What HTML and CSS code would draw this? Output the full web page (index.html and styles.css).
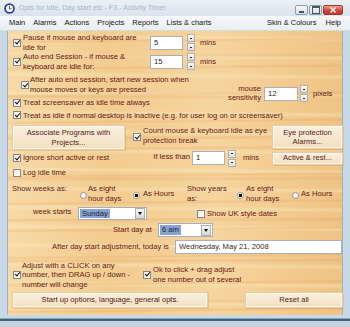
FILE: index.html
```html
<!DOCTYPE html>
<html>
  <head>
    <title>Opts for Idle, Day start etc - F3 - Activity Timer</title>
    <meta charset="UTF-8">
    <link rel="stylesheet" href="styles.css">
  </head>
  <body>
    <div class="win">
      <div class="titlebar">
        <svg class="appicon" width="11" height="11" viewBox="0 0 11 11">
          <circle cx="5.5" cy="5.5" r="5.3" fill="#1e48a6"/>
          <circle cx="5.5" cy="5.5" r="3.5" fill="#fff"/>
          <path d="M5.5 2.8v2.9h2.1" stroke="#d3352b" stroke-width="1.1" fill="none"/>
        </svg>
        <span class="title">Opts for Idle, Day start etc - F3 - Activity Timer</span>
        <div class="ctrls">
          <span class="cbtn min"></span>
          <span class="cbtn max"></span>
          <span class="cbtn close">
            <svg width="8" height="6" viewBox="0 0 8 6"><path d="M1.5 0.5l5 5M6.5 0.5l-5 5" stroke="#fff" stroke-width="1.4"/></svg>
          </span>
        </div>
      </div>

      <div class="menubar">
        <span>Main</span><span>Alarms</span><span>Actions</span><span>Projects</span><span>Reports</span><span>Lists &amp; charts</span>
        <span class="right">Skin &amp; Colours</span><span class="last">Help</span>
      </div>

      <div class="frame">
        <div class="panel">
          <div class="row r-idle">
            <span class="cb on"></span>
            <span class="lbl idle-lbl">Pause if mouse and keyboard are<br>idle for</span>
            <span class="field idle-val">5</span>
            <span class="spin"><i></i><i></i></span>
            <span class="unit">mins</span>
          </div>
          <div class="row r-idle">
            <span class="cb on"></span>
            <span class="lbl idle-lbl">Auto end Session - if mouse &amp;<br>keyboard are idle for:</span>
            <span class="field idle-val">15</span>
            <span class="spin"><i></i><i></i></span>
            <span class="unit">mins</span>
          </div>
          <div class="row r-restart">
            <span class="cb on"></span>
            <span class="lbl restart-lbl">After auto end session, start new session when<br>mouse moves or keys are pressed</span>
            <div class="sens">
              <span class="sens-lbl">mouse<br>sensitivity</span>
              <span class="field sens-val">12</span>
              <span class="spin"><i></i><i></i></span>
              <span class="unit">pixels</span>
            </div>
          </div>
          <div class="row r-line r-saver">
            <span class="cb on"></span>
            <span class="lbl">Treat screensaver as idle time always</span>
          </div>
          <div class="row r-line r-desk">
            <span class="cb on"></span>
            <span class="lbl">Treat as idle if normal desktop is inactive (e.g. for user log on or screensaver)</span>
          </div>
          <div class="row r-assoc">
            <button class="btn assoc">Associate Programs with<br>Projects...</button>
            <span class="cb on"></span>
            <span class="lbl eye-lbl">Count mouse &amp; keyboard idle as eye<br>protection break</span>
            <button class="btn eye">Eye protection<br>Alarms...</button>
          </div>
          <div class="row r-short">
            <span class="cb on"></span>
            <span class="lbl short-lbl">Ignore short active or rest</span>
            <span class="less">If less than</span>
            <span class="field less-val">1</span>
            <span class="spin"><i></i><i></i></span>
            <span class="unit less-unit">mins</span>
            <button class="btn rest">Active &amp; rest...</button>
          </div>
          <div class="row r-line r-log">
            <span class="cb"></span>
            <span class="lbl">Log idle time</span>
          </div>
          <div class="row r-show">
            <span class="show-weeks">Show weeks as:</span>
            <span class="rb"></span>
            <span class="opt opt-eight">As eight<br>hour days</span>
            <span class="rb on"></span>
            <span class="opt opt-hours">As Hours</span>
            <span class="show-years">Show years<br>as:</span>
            <span class="rb on"></span>
            <span class="opt opt-eight2">As eight<br>hour days</span>
            <span class="rb"></span>
            <span class="opt opt-hours2">As Hours</span>
          </div>
          <div class="row r-week">
            <span class="week-lbl">week starts</span>
            <span class="sel week-sel"><span class="val">Sunday</span><span class="dd"></span></span>
            <span class="cb uk-cb"></span>
            <span class="lbl">Show UK style dates</span>
          </div>
          <div class="row r-start">
            <span class="start-lbl">Start day at</span>
            <span class="sel start-sel"><span class="val">6 am</span><span class="dd"></span></span>
          </div>
          <div class="row r-today">
            <span class="today-lbl">After day start adjustment, today is</span>
            <span class="field today-val">Wednesday, May 21, 2008</span>
          </div>
          <div class="row r-adjust">
            <span class="cb on"></span>
            <span class="lbl adjust-lbl">Adjust with a CLICK on any<br>number, then DRAG up / down -<br>number will change</span>
            <span class="cb on"></span>
            <span class="lbl">Ok to click + drag adjust<br>one number out of several</span>
          </div>
          <div class="row r-btns">
            <button class="btn startup">Start up options, language, general opts.</button>
            <button class="btn reset">Reset all</button>
          </div>
        </div>
      </div>
      <div class="bottom"></div>
    </div>
  </body>
</html>
```

FILE: styles.css
```css
* {
  box-sizing: border-box;
}
html, body {
  margin: 0;
  width: 350px;
  height: 327px;
  overflow: hidden;
}
body {
  font-family: "Liberation Sans", Arial, sans-serif;
  font-size: 7.6px;
  line-height: 9.5px;
  color: #661815;
  background: #c9d6e2;
}
.win {
  width: 350px;
  height: 327px;
  display: flex;
  flex-direction: column;
}

/* title bar */
.titlebar {
  height: 16px;
  display: flex;
  align-items: center;
  padding-left: 4px;
  background: linear-gradient(#eaf0f6, #d9e4ee);
  color: #aab6c3;
  font-size: 7.2px;
}
.appicon {
  flex: none;
}
.title {
  margin-left: 4px;
  white-space: nowrap;
}
.ctrls {
  margin-left: auto;
  margin-right: 7px;
  align-self: flex-start;
  margin-top: 5px;
  display: flex;
  gap: 1px;
}
.cbtn {
  height: 10px;
  width: 13px;
  border: 1px solid #8e9eae;
  border-radius: 2px;
  background: linear-gradient(#f8fafc, #d6dee6);
  display: flex;
  align-items: center;
  justify-content: center;
}
.cbtn.min::after {
  content: '';
  width: 5px;
  height: 2px;
  margin-top: 3px;
  background: #4a5560;
}
.cbtn.max::after {
  content: '';
  width: 6px;
  height: 5px;
  border: 1px solid #4a5560;
  border-top-width: 2px;
}
.cbtn.close {
  width: 20px;
  border-color: #9a3a30;
  background: linear-gradient(#eea093, #d0493a 55%, #c1392b);
}

/* menu */
.menubar {
  height: 15px;
  display: flex;
  align-items: center;
  padding: 0 9px;
  background: linear-gradient(#f7f9fb, #e9eef3);
  border-bottom: 1px solid #d3dbe3;
  color: #141414;
  font-size: 7.5px;
  white-space: nowrap;
}
.menubar span {
  margin-right: 8px;
}
.menubar .right {
  margin-left: auto;
  margin-right: 9px;
}
.menubar .last {
  margin-right: 0;
}

/* frame + wood panel */
.frame {
  display: flex;
  border-left: 7px solid #c9d8e6;
  border-right: 7px solid #c9d8e6;
}
.panel {
  width: 336px;
  height: 284px;
  padding: 2px 0 0 6px;
  box-shadow: inset 1px 0 0 #9fb2c4, inset -1px 0 0 #9fb2c4;
  background-color: #f1c88a;
  background-image:
    repeating-linear-gradient(179.4deg, rgba(0,0,0,0) 0 9px, rgba(222,150,80,.22) 11px, rgba(0,0,0,0) 13px, rgba(0,0,0,0) 27px),
    repeating-linear-gradient(180.5deg, rgba(0,0,0,0) 0 5px, rgba(255,238,200,.35) 8px, rgba(0,0,0,0) 11px, rgba(0,0,0,0) 19px),
    repeating-linear-gradient(179.8deg, rgba(0,0,0,0) 0 23px, rgba(215,135,65,.18) 25px, rgba(0,0,0,0) 28px, rgba(0,0,0,0) 41px),
    linear-gradient(90deg, rgba(255,236,196,.5), rgba(255,236,196,.1) 30%, rgba(255,236,196,.35) 62%, rgba(232,172,104,.2));
}
.bottom {
  flex: 1;
  background: linear-gradient(#c9d8e6 0 3px, #8aa4bb 3px 4px, #3f6478 4px 6px, #c5d2de 6px);
}

/* rows */
.row {
  display: flex;
  align-items: center;
  white-space: nowrap;
}
.cb {
  flex: none;
  width: 8px;
  height: 8px;
  border: 1px solid #878787;
  background: linear-gradient(135deg, #e9e9e9, #fff);
}
.cb.on::after {
  content: '';
  display: block;
  width: 2px;
  height: 4px;
  margin: -0.5px 0 0 1.6px;
  border: solid #151515;
  border-width: 0 1.5px 1.5px 0;
  transform: rotate(40deg);
}
.lbl {
  margin-left: 2px;
}
.field {
  flex: none;
  display: flex;
  align-items: center;
  height: 14px;
  padding-left: 3px;
  background: #fff;
  border: 1px solid #a9afb7;
  color: #1b1b33;
}
.spin {
  flex: none;
  width: 8px;
  height: 17px;
  display: flex;
  flex-direction: column;
  justify-content: space-between;
}
.spin i {
  height: 8px;
  border: 1px solid #b2b2b2;
  background: linear-gradient(#fbfbfb, #dcdcdc);
  display: flex;
  align-items: center;
  justify-content: center;
}
.spin i::after {
  content: '';
  width: 2px;
  height: 1px;
  background: #333;
}
.unit {
  margin-left: 5px;
}

.r-idle {
  height: 19px;
}
.idle-lbl {
  width: 127px;
}
.idle-val {
  width: 33px;
}
.r-idle .spin {
  margin-left: 4px;
}

.r-restart {
  height: 19px;
  margin-top: 4px;
  align-items: flex-start;
}
.r-restart > .cb {
  margin: 6px 0 0 8px;
}
.restart-lbl {
  margin-left: 1px;
  width: 190px;
}
.sens {
  display: flex;
  align-items: center;
  margin-top: 10px;
}
.sens-lbl {
  width: 41px;
  text-align: right;
  line-height: 8.5px;
}
.sens-val {
  width: 34px;
  margin-left: 3px;
}
.sens .spin {
  margin-left: 2px;
}

.r-line {
  height: 9.5px;
}
.r-saver {
  margin-top: 4px;
}
.r-desk {
  margin-top: 3px;
}

.btn {
  flex: none;
  font: inherit;
  color: #5a1716;
  padding: 0;
  border: 1px solid #e6cca4;
  border-radius: 1px;
  background: linear-gradient(#faf0df, #f2dfbf);
  box-shadow: inset 0 0 0 1px #fdf6ea, 1px 1px 0 rgba(190,140,80,.25);
}

.r-assoc {
  margin-top: 5px;
  align-items: flex-start;
}
.assoc {
  width: 113px;
  height: 25px;
  margin-left: -1px;
}
.r-assoc > .cb {
  margin: 8px 0 0 8px;
}
.eye-lbl {
  margin-top: 1px;
}
.eye {
  width: 71px;
  height: 24px;
  margin-left: auto;
}

.r-short {
  height: 16px;
}
.short-lbl {
  width: 130px;
}
.less {
  width: 37px;
  text-align: right;
  margin-top: -3px;
}
.less-val {
  width: 33px;
  margin-left: 2px;
}
.r-short .spin {
  margin-left: 3px;
}
.less-unit {
  margin-left: 7px;
}
.rest {
  width: 71px;
  height: 13px;
  margin-left: auto;
}

.r-log {
  margin-top: 2px;
}

.r-show {
  margin-top: 6.5px;
  height: 19px;
  align-items: flex-start;
}
.rb {
  flex: none;
  width: 7px;
  height: 7px;
  margin-top: 8px;
  border-radius: 50%;
  border: 1px solid #9a9a9a;
  background: radial-gradient(#fff, #e4e4e4);
}
.rb.on {
  background: radial-gradient(circle, #111 0 1.5px, #fff 2px);
}
.show-weeks {
  width: 68px;
  margin-left: -1px;
}
.opt-eight {
  width: 45px;
  margin-left: 1px;
}
.opt-hours {
  width: 44px;
  margin: 5px 0 0 3px;
}
.show-years {
  width: 50px;
}
.opt-eight2 {
  width: 46px;
  margin-left: 2px;
}
.opt-hours2 {
  margin: 5px 0 0 2px;
}

.sel {
  flex: none;
  display: flex;
  align-items: center;
  height: 13px;
  padding: 1px;
  background: #fff;
  border: 1px solid #a9afb7;
}
.sel .val {
  padding: 0 2px;
  background: #8aa2ce;
  color: #111e48;
}
.sel .dd {
  margin-left: auto;
  width: 10px;
  height: 11px;
  border: 1px solid #b0b0b0;
  background: linear-gradient(#f8f8f8, #d6d6d6);
  display: flex;
  align-items: center;
  justify-content: center;
}
.sel .dd::after {
  content: '';
  border-left: 2px solid transparent;
  border-right: 2px solid transparent;
  border-top: 3px solid #111;
}

.r-week {
  margin-top: 4px;
  height: 13px;
}
.week-lbl {
  width: 45px;
  margin-left: 20px;
  margin-top: -4px;
}
.week-sel {
  width: 69px;
}
.uk-cb {
  margin-left: 50px;
}

.r-start {
  margin-top: 3px;
  height: 14px;
}
.start-lbl {
  width: 45px;
  margin-left: 100px;
}
.start-sel {
  width: 55px;
  height: 14px;
}

.r-today {
  margin-top: 3px;
  height: 14px;
}
.today-lbl {
  width: 123px;
  margin-left: 39px;
}
.today-val {
  width: 167px;
  height: 14px;
  color: #3a1f22;
}

.r-adjust {
  margin-top: 6.5px;
  height: 28.5px;
}
.adjust-lbl {
  width: 121px;
  margin-left: 1px;
}

.r-btns {
  margin-top: 3px;
}
.startup {
  width: 196px;
  height: 16px;
  margin-left: -1px;
}
.reset {
  width: 98px;
  height: 16px;
  margin-left: auto;
}
```
